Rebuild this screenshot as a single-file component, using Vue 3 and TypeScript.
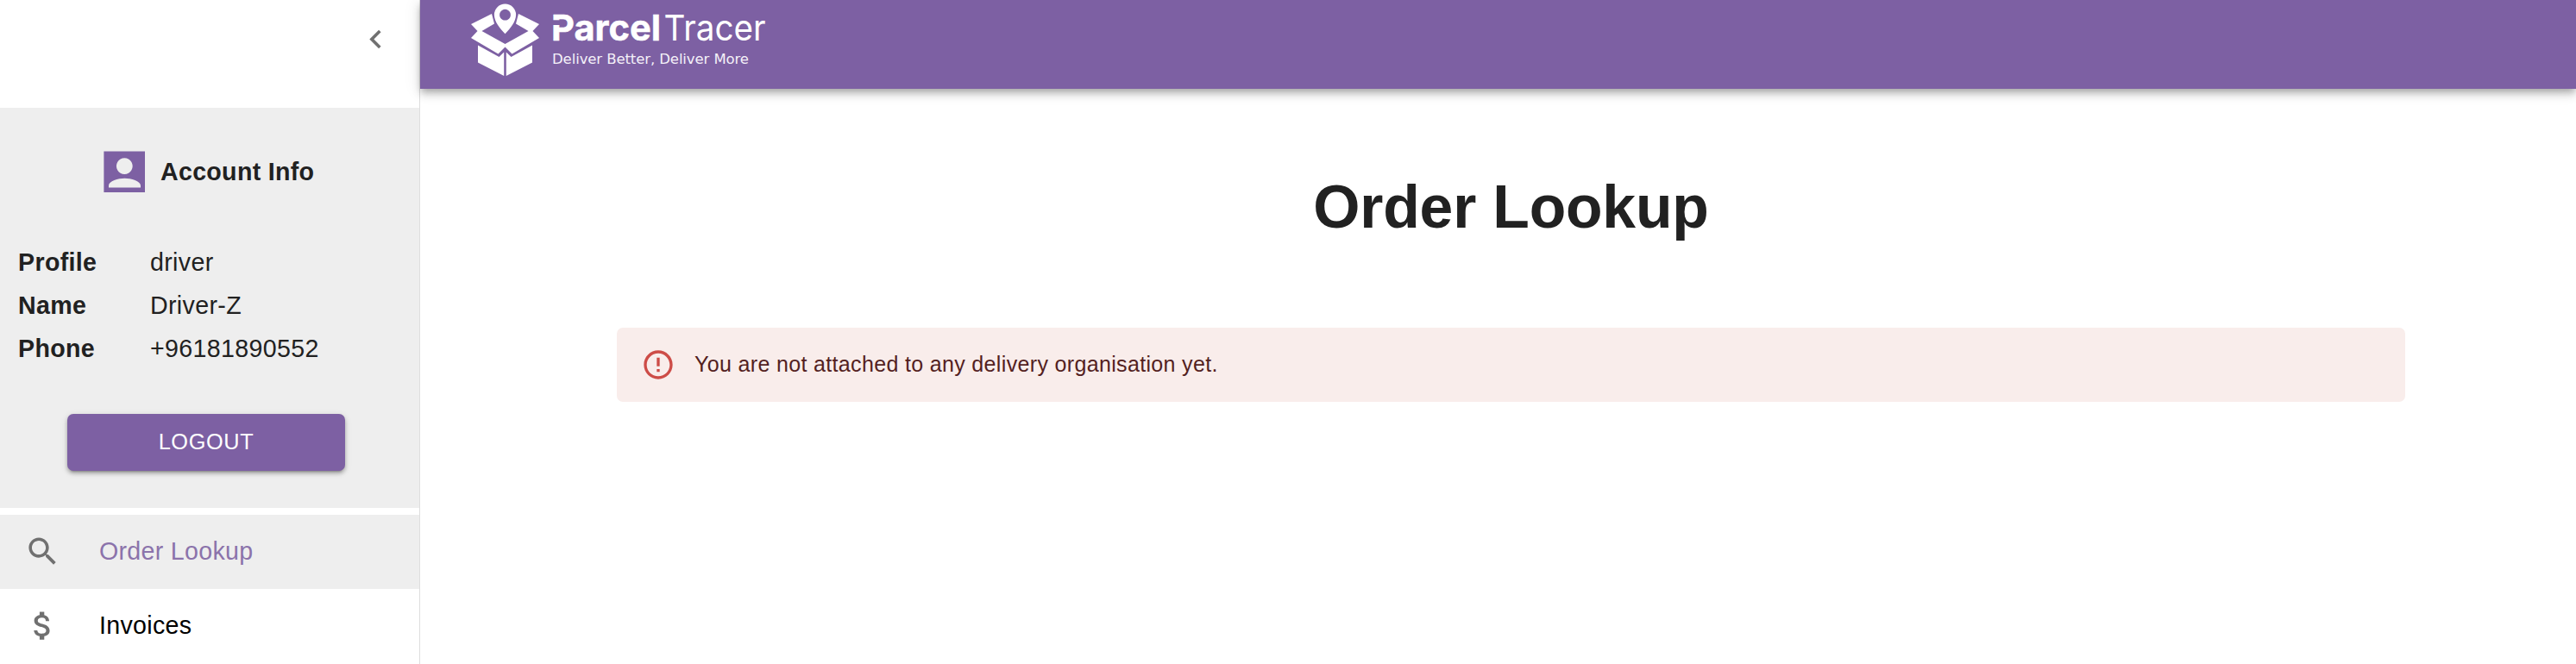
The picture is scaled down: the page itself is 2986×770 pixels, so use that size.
<script setup lang="ts">
interface Detail { label: string; value: string }

const details: Detail[] = [
  { label: 'Profile', value: 'driver' },
  { label: 'Name', value: 'Driver-Z' },
  { label: 'Phone', value: '+96181890552' },
]
</script>

<template>
  <div class="layout">
    <aside class="sidebar">
      <div class="sidebar-top">
        <button class="collapse" aria-label="Collapse menu">
          <svg width="43" height="43" viewBox="0 0 24 24"><path d="M15.41 7.41 14 6l-6 6 6 6 1.41-1.41L10.83 12z" /></svg>
        </button>
      </div>
      <section class="account">
        <div class="account-title">
          <svg class="account-icon" viewBox="0 0 48 48">
            <path fill-rule="evenodd" d="M.4.4H48V48H.4zM24.3 8.2a9.4 9.4 0 1 0 .01 0zM6 42.6h37v-2.4c0-5-11-8.4-18.5-8.4S6 35.200 6 40.200z" />
          </svg>
          <h2>Account Info</h2>
        </div>
        <dl class="details">
          <div v-for="item in details" :key="item.label" class="detail">
            <dt>{{ item.label }}</dt>
            <dd>{{ item.value }}</dd>
          </div>
        </dl>
        <button class="logout">LOGOUT</button>
      </section>
      <nav class="menu">
        <a class="menu-item active">
          <svg width="43" height="43" viewBox="0 0 24 24"><path d="M15.5 14h-.79l-.28-.27C15.41 12.59 16 11.110 16 9.500 16 5.910 13.090 3 9.500 3S3 5.910 3 9.500 5.910 16 9.500 16c1.610 0 3.090-.59 4.230-1.570l.27.28v.79l5 4.990L20.490 19l-4.990-5zm-6 0C7.010 14 5 11.990 5 9.500S7.010 5 9.500 5 14 7.010 14 9.500 11.990 14 9.500 14z" /></svg>
          <span>Order Lookup</span>
        </a>
        <a class="menu-item">
          <svg width="43" height="43" viewBox="0 0 24 24"><path d="M11.8 10.9c-2.270-.59-3-1.200-3-2.150 0-1.090 1.010-1.850 2.700-1.850 1.780 0 2.440.85 2.500 2.100h2.210c-.07-1.720-1.120-3.300-3.210-3.810V3h-3v2.160c-1.940.42-3.500 1.680-3.500 3.610 0 2.310 1.910 3.460 4.700 4.130 2.500.6 3 1.480 3 2.410 0 .69-.49 1.790-2.700 1.790-2.060 0-2.870-.92-2.980-2.100h-2.200c.12 2.190 1.760 3.420 3.680 3.830V21h3v-2.150c1.950-.37 3.500-1.500 3.500-3.550 0-2.840-2.430-3.810-4.700-4.400z" /></svg>
          <span>Invoices</span>
        </a>
      </nav>
    </aside>

    <div class="page">
      <header class="app-bar">
        <svg class="logo" width="360" height="103" viewBox="540 0 360 103">
          <g fill="#fff">
            <path d="M546 28 570 16 573 27.500 558.500 36 585.500 51 612.500 36 598 27.500 601 16 625 28 617.500 36 625 44 593.500 62.500 585.500 54.500 577.500 62.500 546 44 553.500 36z" />
            <path d="M554 52.500 578.500 66 584.200 60.500V88L554 72.500zM617 52.500 592.500 66 586.800 60.500V88L617 72.500z" />
            <path fill-rule="evenodd" d="M585.500 4.500a12.600 12.600 0 0 0-12.600 12.600c0 8 6.500 16 12.600 22.200 6.100-6.200 12.600-14.200 12.600-22.200a12.600 12.600 0 0 0-12.600-12.600zm0 6.300a6.400 6.400 0 1 1-.01 0z" />
            <text class="brand-bold" x="639" y="47.300" textLength="127" lengthAdjust="spacingAndGlyphs">Parcel</text>
            <text class="brand-light" x="769.500" y="47.300" textLength="118" lengthAdjust="spacingAndGlyphs">Tracer</text>
            <text class="tagline" x="640" y="73.500" textLength="228">Deliver Better, Deliver More</text>
          </g>
          <rect x="639" y="23.300" width="11" height="5.700" fill="#7d60a3" />
        </svg>
      </header>
      <main class="content">
        <h1>Order Lookup</h1>
        <div class="alert" role="alert">
          <svg width="40" height="40" viewBox="0 0 24 24"><path d="M11 15h2v2h-2zm0-8h2v6h-2zm.99-5C6.470 2 2 6.480 2 12s4.470 10 9.990 10C17.520 22 22 17.520 22 12S17.520 2 11.990 2zM12 20c-4.420 0-8-3.580-8-8s3.580-8 8-8 8 3.580 8 8-3.580 8-8 8z" /></svg>
          <span>You are not attached to any delivery organisation yet.</span>
        </div>
      </main>
    </div>
  </div>
</template>

<style>
body { margin: 0; overflow: hidden; background: #fff; }
</style>

<style scoped>
* { box-sizing: border-box; }
.layout {
  display: flex;
  height: 770px;
  overflow: hidden;
  font-family: "Liberation Sans", Arial, sans-serif;
  color: #212121;
}
.sidebar {
  flex: 0 0 487px;
  border-right: 1px solid #dedede;
  background: #fff;
}
.sidebar-top {
  height: 125px;
  display: flex;
  justify-content: flex-end;
  padding: 24px 29px 0 0;
}
.collapse {
  width: 43px;
  height: 43px;
  padding: 0;
  border: 0;
  background: none;
}
svg { display: block; flex: none; }
.collapse svg, .menu-item svg { fill: #707070; }
.account {
  height: 464px;
  background: #eee;
}
.account-title {
  display: flex;
  align-items: center;
  gap: 18px;
  padding: 50px 0 0 120px;
}
.account-icon {
  width: 48px;
  height: 48px;
  fill: #7d60a3;
}
h2 {
  margin: 0;
  font-size: 28.600px;
  line-height: 43px;
  letter-spacing: 0.300px;
}
.details {
  margin: 56px 0 0;
  padding-left: 21px;
}
.detail {
  display: flex;
  height: 50px;
  align-items: center;
  font-size: 28.600px;
  letter-spacing: 0.340px;
}
dt { width: 153px; font-weight: 700; }
dd { margin: 0; }
.logout {
  display: block;
  width: 322px;
  height: 66px;
  margin: 51px 0 0 78px;
  padding: 0 0 2px;
  border: 0;
  border-radius: 7px;
  background: #7d60a3;
  color: #fff;
  font-family: inherit;
  font-size: 25.300px;
  letter-spacing: 0.650px;
  box-shadow: 0 5px 2px -4px rgba(0, 0, 0, 0.2), 0 3px 4px rgba(0, 0, 0, 0.24), 0 2px 9px rgba(0, 0, 0, 0.12);
}
.menu { padding-top: 8px; }
.menu-item {
  display: flex;
  align-items: center;
  gap: 44px;
  height: 86px;
  padding: 0 0 2px 28px;
  font-size: 28.600px;
  letter-spacing: 0.300px;
  color: #000;
}
.menu-item.active { background: #eee; color: #8b73ab; }
.page { flex: 1; min-width: 0; }
.app-bar {
  height: 103px;
  padding-left: 53px;
  background: #7d60a3;
  box-shadow: 0 4px 7px -2px rgba(0, 0, 0, 0.2), 0 7px 9px rgba(0, 0, 0, 0.14), 0 2px 18px rgba(0, 0, 0, 0.12);
}
.brand-bold { font: 700 41px Inter, sans-serif; stroke: #fff; stroke-width: 0.500px; }
.brand-light { font: 400 41px Inter, sans-serif; }
.tagline { font: 16.500px "DejaVu Sans", sans-serif; fill: #f4f0f8; }
.content { padding: 97px 198px 0 228px; }
h1 {
  margin: 0;
  font-size: 69.700px;
  line-height: 80px;
  letter-spacing: -0.200px;
  text-align: center;
}
.alert {
  display: flex;
  align-items: center;
  gap: 22px;
  height: 86px;
  margin-top: 100px;
  padding: 0 0 1px 28px;
  border-radius: 7px;
  background: #f9edeb;
  color: #541f1f;
  font-size: 25.060px;
  letter-spacing: 0.320px;
}
.alert svg { fill: #cd4c47; }
</style>
